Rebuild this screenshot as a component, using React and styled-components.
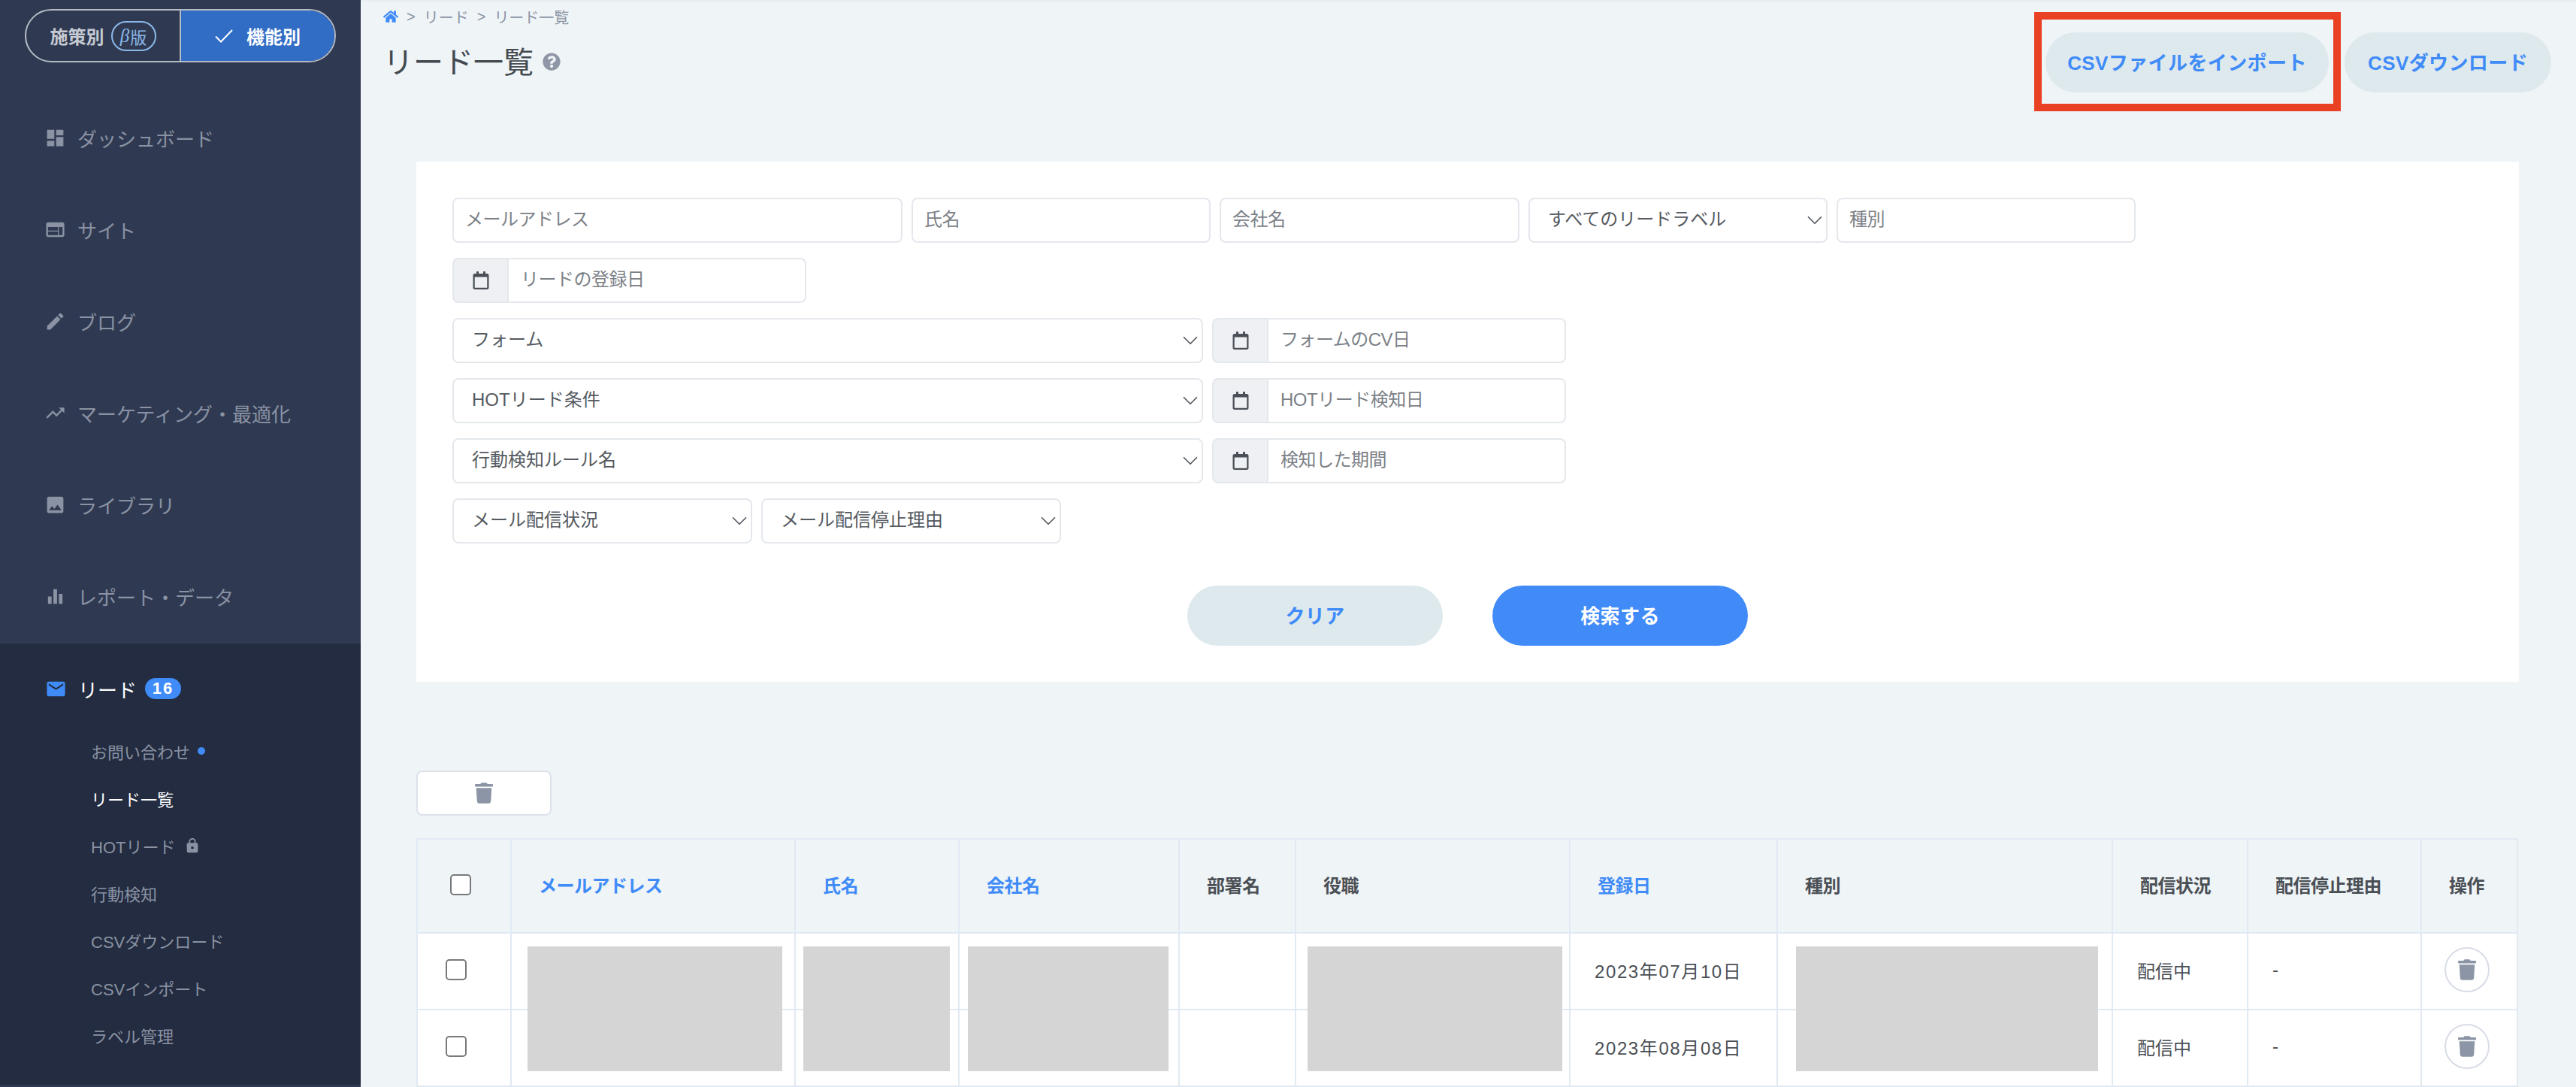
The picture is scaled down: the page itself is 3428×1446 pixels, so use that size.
import React from 'react';
import styled, { createGlobalStyle } from 'styled-components';
import {
  MdDashboard,
  MdWeb,
  MdEdit,
  MdTrendingUp,
  MdImage,
  MdEqualizer,
  MdEmail,
  MdLock,
} from 'react-icons/md';
import { FaHome, FaQuestionCircle, FaRegCalendar, FaTrash } from 'react-icons/fa';
import { LuChevronDown } from 'react-icons/lu';

const GlobalStyle = createGlobalStyle`
  * {
    box-sizing: border-box;
  }
  html, body {
    margin: 0;
    padding: 0;
    height: 100%;
    overflow: hidden;
    background: #eff4f7;
    font-family: "Liberation Sans", "Noto Sans CJK JP", sans-serif;
  }
`;

const Page = styled.div`
  width: 3428px;
  height: 1446px;
  display: flex;
  overflow: hidden;
`;

const Sidebar = styled.aside`
  width: 480px;
  flex-shrink: 0;
  height: 100%;
  background: #2f3a52;
  display: flex;
  flex-direction: column;
  padding-top: 12px;
`;

const Toggle = styled.div`
  width: 414px;
  height: 71px;
  margin-left: 33px;
  margin-bottom: 41px;
  border: 2px solid #b6bac3;
  border-radius: 36px;
  display: flex;
  overflow: hidden;
  flex-shrink: 0;
`;

const ToggleSide = styled.div`
  flex: 1;
  display: flex;
  align-items: center;
  justify-content: center;
  gap: ${p => (p.$active ? '18px' : '9px')};
  font-size: 24px;
  font-weight: 700;
  color: ${p => (p.$active ? '#fff' : '#c6cad3')};
  background: ${p => (p.$active ? '#316cc5' : 'transparent')};
  border-left: ${p => (p.$active ? '2px solid #b6bac3' : 'none')};
`;

const BetaBadge = styled.span`
  width: 60px;
  height: 40px;
  border: 2px solid #8cb8ea;
  border-radius: 20px;
  color: #8cb8ea;
  font-size: 22px;
  font-weight: 400;
  display: flex;
  align-items: center;
  justify-content: center;
  & > i {
    font-family: "Liberation Serif", serif;
    font-size: 25px;
    margin-right: 1px;
  }
`;

const NavItem = styled.div`
  height: 122px;
  flex-shrink: 0;
  padding: 0 0 4px 59px;
  display: flex;
  align-items: center;
  gap: 15px;
  font-size: 26px;
  color: #8a92a3;
  & > svg {
    width: 29px;
    height: 29px;
    flex-shrink: 0;
  }
`;

const LeadSection = styled.div`
  height: 587px;
  flex-shrink: 0;
  background: #232c40;
  padding-top: 42px;
`;

const LeadTitle = styled.div`
  height: 36px;
  padding-left: 60px;
  display: flex;
  align-items: center;
  font-size: 26px;
  color: #fff;
  & > svg {
    width: 29px;
    height: 29px;
    color: #3f8bf8;
    margin-right: 15px;
    flex-shrink: 0;
  }
`;

const CountBadge = styled.span`
  width: 48px;
  height: 28px;
  margin-left: 11px;
  border-radius: 14px;
  background: #3f8bf8;
  color: #fff;
  font-size: 22px;
  font-weight: 700;
  letter-spacing: 2px;
  display: flex;
  align-items: center;
  justify-content: center;
`;

const SubList = styled.div`
  margin-top: 33px;
  display: flex;
  flex-direction: column;
`;

const SubItem = styled.div`
  height: 63px;
  padding-left: 121px;
  display: flex;
  align-items: center;
  font-size: 22px;
  color: ${p => (p.$active ? '#fff' : '#8a92a3')};
  & > svg {
    width: 22px;
    height: 22px;
    margin-left: 12px;
  }
`;

const Dot = styled.span`
  width: 10px;
  height: 10px;
  border-radius: 50%;
  background: #3f8bf8;
  margin-left: 10px;
`;

const Main = styled.main`
  flex: 1;
  min-width: 0;
  height: 100%;
  background: #eff4f7;
  border-top: 3px solid #e9eef1;
  display: flex;
  flex-direction: column;
`;

const PageHead = styled.header`
  height: 120px;
  flex-shrink: 0;
  padding: 0 33px 0 30px;
  display: flex;
  justify-content: space-between;
`;

const TitleBlock = styled.div`
  padding-top: 5px;
`;

const Breadcrumb = styled.div`
  height: 28px;
  display: flex;
  align-items: center;
  gap: 11px;
  font-size: 20px;
  color: #8a93a3;
  & > svg {
    width: 20px;
    height: 18px;
    color: #3f8bf8;
  }
`;

const Title = styled.h1`
  margin: 20px 0 0;
  height: 48px;
  display: flex;
  align-items: center;
  gap: 12px;
  font-size: 40px;
  font-weight: 400;
  color: #444a50;
  & > svg {
    width: 24px;
    height: 24px;
    color: #8f96a5;
    margin-top: 4px;
  }
`;

const Actions = styled.div`
  padding-top: 40px;
  display: flex;
  gap: 21px;
`;

const Pill = styled.button`
  height: 80px;
  width: ${p => p.$width}px;
  border: none;
  border-radius: 40px;
  padding: 0 0 3px;
  font-family: inherit;
  font-size: 26px;
  font-weight: 700;
  letter-spacing: 0.4px;
  color: ${p => (p.$primary ? '#fff' : '#3f8bf8')};
  background: ${p => (p.$primary ? '#418bf8' : '#dee9ed')};
`;

const Highlighted = styled.div`
  position: relative;
  &::after {
    content: '';
    position: absolute;
    top: -27px;
    right: -16px;
    bottom: -25px;
    left: -15px;
    border: 10px solid #ea4024;
    pointer-events: none;
  }
`;

const Content = styled.div`
  margin: 92px 76px 0 74px;
`;

const SearchCard = styled.section`
  height: 692px;
  background: #fff;
  padding: 48px;
  display: flex;
  flex-direction: column;
  gap: 20px;
`;

const FormRow = styled.div`
  display: flex;
  gap: 12px;
`;

const TextInput = styled.input`
  width: ${p => p.$width}px;
  height: 60px;
  border: 2px solid #e4e8ec;
  border-radius: 8px;
  padding: 0 15px 3px;
  font-family: inherit;
  font-size: 24px;
  color: #4a4f55;
  background: #fff;
  outline: none;
  &::placeholder {
    color: #7c8187;
    letter-spacing: -0.5px;
    opacity: 1;
  }
`;

const SelectWrap = styled.div`
  position: relative;
  width: ${p => p.$width}px;
  height: 60px;
  & > svg {
    position: absolute;
    top: 13px;
    right: 0;
    width: 34px;
    height: 34px;
    color: #54595f;
    pointer-events: none;
  }
`;

const Select = styled.select`
  width: 100%;
  height: 100%;
  appearance: none;
  border: 2px solid #e4e8ec;
  border-radius: 8px;
  padding: 0 40px 3px 24px;
  font-family: inherit;
  font-size: 24px;
  color: #555a60;
  background: #fff;
  outline: none;
`;

const DateGroup = styled.div`
  width: 471px;
  height: 60px;
  display: flex;
`;

const DateAddon = styled.div`
  width: 73px;
  flex-shrink: 0;
  border: 2px solid #e4e8ec;
  border-right: none;
  border-radius: 8px 0 0 8px;
  background: #eef0f3;
  display: flex;
  align-items: center;
  justify-content: center;
  color: #4b5058;
  & > svg {
    width: 22px;
    height: 24px;
  }
`;

const DateInput = styled(TextInput)`
  width: auto;
  flex: 1;
  min-width: 0;
  border-radius: 0 8px 8px 0;
  padding-left: 16px;
`;

const SearchActions = styled.div`
  margin-top: 36px;
  display: flex;
  justify-content: center;
  gap: 66px;
`;

const DeleteAll = styled.button`
  margin-top: 118px;
  width: 180px;
  height: 60px;
  display: flex;
  align-items: center;
  justify-content: center;
  border: 2px solid #dde2ea;
  border-radius: 8px;
  background: #fff;
  color: #8c95a6;
  padding: 0;
  & > svg {
    width: 24px;
    height: 28px;
  }
`;

const TableWrap = styled.div`
  position: relative;
  margin-top: 30px;
  width: 2797px;
`;

const Table = styled.table`
  width: 100%;
  table-layout: fixed;
  border-spacing: 0;
  font-size: 24px;
  color: #4a4f55;
`;

const HeadCell = styled.th`
  height: 127px;
  padding: 0 0 4px 36px;
  text-align: left;
  font-weight: 700;
  letter-spacing: -0.5px;
  color: ${p => (p.$link ? '#3f8bf8' : '#4a4f55')};
  background: #eff4f7;
  border-top: 2px solid #e1e9f3;
  border-bottom: 2px solid #e1e9f3;
  border-left: 2px solid #e1e9f3;
  &:last-child {
    border-right: 2px solid #e1e9f3;
  }
`;

const BodyCell = styled.td`
  height: 102px;
  padding: 0 0 4px 32px;
  background: #fff;
  border-bottom: 2px solid #e1e9f3;
  border-left: 2px solid #e1e9f3;
  &:last-child {
    border-right: 2px solid #e1e9f3;
    padding-left: 30px;
  }
`;

const DateText = styled.span`
  letter-spacing: 1.6px;
`;

const Check = styled.span`
  display: block;
  width: 28px;
  height: 28px;
  margin-left: ${p => p.$offset}px;
  border: 2px solid #77797d;
  border-radius: 5px;
  background: #fff;
`;

const RowDelete = styled.span`
  width: 60px;
  height: 60px;
  display: flex;
  align-items: center;
  justify-content: center;
  border: 2px solid #d8dce6;
  border-radius: 50%;
  color: #8c95a6;
  & > svg {
    width: 24px;
    height: 28px;
  }
`;

// masked personal data, laid over the two rows of the table
const Redaction = styled.div`
  position: absolute;
  top: 144px;
  height: 166px;
  left: ${p => p.$left}px;
  width: ${p => p.$width}px;
  background: #d5d5d5;
`;

const navItems = [
  { icon: MdDashboard, label: 'ダッシュボード' },
  { icon: MdWeb, label: 'サイト' },
  { icon: MdEdit, label: 'ブログ' },
  { icon: MdTrendingUp, label: 'マーケティング・最適化' },
  { icon: MdImage, label: 'ライブラリ' },
  { icon: MdEqualizer, label: 'レポート・データ' },
];

const columns = [
  { label: '', width: 125 },
  { label: 'メールアドレス', width: 378, link: true },
  { label: '氏名', width: 218, link: true },
  { label: '会社名', width: 293, link: true },
  { label: '部署名', width: 155 },
  { label: '役職', width: 365 },
  { label: '登録日', width: 276, link: true },
  { label: '種別', width: 446 },
  { label: '配信状況', width: 180 },
  { label: '配信停止理由', width: 231 },
  { label: '操作', width: 130 },
];

const rows = ['2023年07月10日', '2023年08月08日'];

const redactions = [
  { left: 148, width: 339 },
  { left: 515, width: 195 },
  { left: 734, width: 267 },
  { left: 1186, width: 339 },
  { left: 1836, width: 402 },
];

const DateField = ({ placeholder }) => (
  <DateGroup>
    <DateAddon>
      <FaRegCalendar />
    </DateAddon>
    <DateInput placeholder={placeholder} />
  </DateGroup>
);

const SelectField = ({ width, label }) => (
  <SelectWrap $width={width}>
    <Select defaultValue={label}>
      <option>{label}</option>
    </Select>
    <LuChevronDown strokeWidth={1.2} />
  </SelectWrap>
);

const App = () => (
  <Page>
    <GlobalStyle />
    <Sidebar>
      <Toggle>
        <ToggleSide>
          施策別
          <BetaBadge>
            <i>β</i>版
          </BetaBadge>
        </ToggleSide>
        <ToggleSide $active>
          <svg width="24" height="18" viewBox="0 0 24 18" fill="none">
            <path d="M1 9.5 L8 16.5 L23 1" stroke="#fff" strokeWidth="2" />
          </svg>
          機能別
        </ToggleSide>
      </Toggle>
      {navItems.map(({ icon: Icon, label }) => (
        <NavItem key={label}>
          <Icon />
          {label}
        </NavItem>
      ))}
      <LeadSection>
        <LeadTitle>
          <MdEmail />
          リード
          <CountBadge>16</CountBadge>
        </LeadTitle>
        <SubList>
          <SubItem>
            お問い合わせ
            <Dot />
          </SubItem>
          <SubItem $active>リード一覧</SubItem>
          <SubItem>
            HOTリード
            <MdLock />
          </SubItem>
          <SubItem>行動検知</SubItem>
          <SubItem>CSVダウンロード</SubItem>
          <SubItem>CSVインポート</SubItem>
          <SubItem>ラベル管理</SubItem>
        </SubList>
      </LeadSection>
    </Sidebar>
    <Main>
      <PageHead>
        <TitleBlock>
          <Breadcrumb>
            <FaHome />
            <span>&gt;</span>
            <span>リード</span>
            <span>&gt;</span>
            <span>リード一覧</span>
          </Breadcrumb>
          <Title>
            リード一覧
            <FaQuestionCircle />
          </Title>
        </TitleBlock>
        <Actions>
          <Highlighted>
            <Pill $width={377}>CSVファイルをインポート</Pill>
          </Highlighted>
          <Pill $width={275}>CSVダウンロード</Pill>
        </Actions>
      </PageHead>
      <Content>
        <SearchCard>
          <FormRow>
            <TextInput $width={599} placeholder="メールアドレス" />
            <TextInput $width={398} placeholder="氏名" />
            <TextInput $width={399} placeholder="会社名" />
            <SelectField width={398} label="すべてのリードラベル" />
            <TextInput $width={398} placeholder="種別" />
          </FormRow>
          <FormRow>
            <DateField placeholder="リードの登録日" />
          </FormRow>
          <FormRow>
            <SelectField width={999} label="フォーム" />
            <DateField placeholder="フォームのCV日" />
          </FormRow>
          <FormRow>
            <SelectField width={999} label="HOTリード条件" />
            <DateField placeholder="HOTリード検知日" />
          </FormRow>
          <FormRow>
            <SelectField width={999} label="行動検知ルール名" />
            <DateField placeholder="検知した期間" />
          </FormRow>
          <FormRow>
            <SelectField width={399} label="メール配信状況" />
            <SelectField width={399} label="メール配信停止理由" />
          </FormRow>
          <SearchActions>
            <Pill $width={340}>クリア</Pill>
            <Pill $width={340} $primary>
              検索する
            </Pill>
          </SearchActions>
        </SearchCard>
        <DeleteAll>
          <FaTrash />
        </DeleteAll>
        <TableWrap>
          <Table>
            <colgroup>
              {columns.map((col, i) => (
                <col key={i} width={col.width} />
              ))}
            </colgroup>
            <thead>
              <tr>
                {columns.map((col, i) => (
                  <HeadCell key={i} $link={col.link}>
                    {i === 0 ? <Check $offset={7} /> : col.label}
                  </HeadCell>
                ))}
              </tr>
            </thead>
            <tbody>
              {rows.map(date => (
                <tr key={date}>
                  <BodyCell>
                    <Check $offset={5} />
                  </BodyCell>
                  <BodyCell />
                  <BodyCell />
                  <BodyCell />
                  <BodyCell />
                  <BodyCell />
                  <BodyCell>
                    <DateText>{date}</DateText>
                  </BodyCell>
                  <BodyCell />
                  <BodyCell>配信中</BodyCell>
                  <BodyCell>-</BodyCell>
                  <BodyCell>
                    <RowDelete>
                      <FaTrash />
                    </RowDelete>
                  </BodyCell>
                </tr>
              ))}
            </tbody>
          </Table>
          {redactions.map(box => (
            <Redaction key={box.left} $left={box.left} $width={box.width} />
          ))}
        </TableWrap>
      </Content>
    </Main>
  </Page>
);

export default App;
